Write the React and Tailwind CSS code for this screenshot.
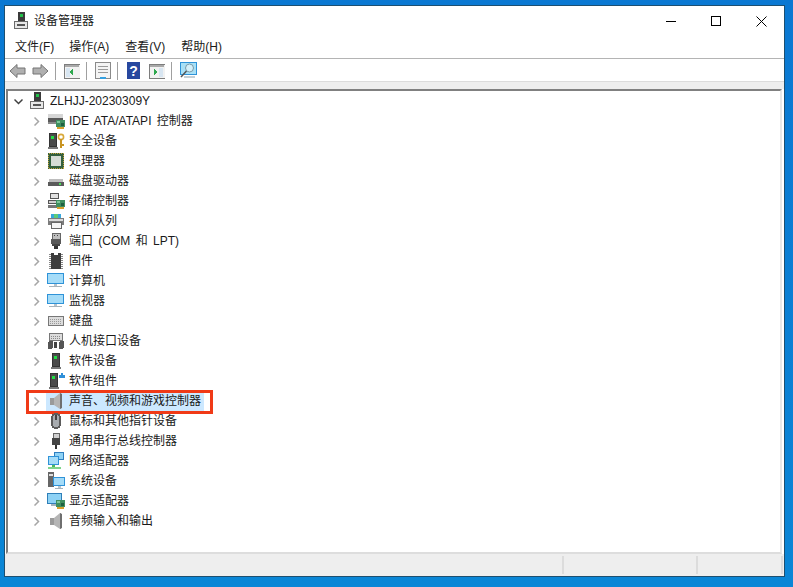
import React from "react";

const Chevron = ({ open }) => (
  <svg width="9" height="9" viewBox="0 0 9 9" fill="none" stroke={open ? "#404040" : "#a6a6a6"} strokeWidth="1.5">
    {open ? <path d="M0.5 2.5 L4.5 6.5 L8.5 2.5" /> : <path d="M2.5 0.5 L6.5 4.5 L2.5 8.5" />}
  </svg>
);

const Svg = ({ children, w = 18 }) => (
  <svg width={w} height="18" viewBox="0 0 18 18" shapeRendering="crispEdges">{children}</svg>
);

const Card = () => (
  <>
    <rect x="9" y="8" width="9" height="7" fill="#3f8f5f" />
    <rect x="10" y="9" width="3" height="2" fill="#7fc79a" />
    <rect x="14" y="11" width="3" height="3" fill="#1f5f40" />
    <rect x="10" y="15" width="7" height="1.5" fill="#d8a02c" />
  </>
);

const Monitor = ({ x = 0, y = 1, w = 17, h = 11 }) => (
  <>
    <rect x={x} y={y} width={w} height={h} fill="#2f93d8" />
    <rect x={x + 1} y={y + 1} width={w - 2} height={h - 2} fill="#a5dcf8" />
    <rect x={x + w / 2 - 1.5} y={y + h} width="3" height="2" fill="#b8c4cc" />
    <rect x={x + 2} y={y + h + 2} width={w - 4} height="1" fill="#a7b3bb" />
  </>
);

const Tower = ({ x = 5 }) => (
  <>
    <rect x={x} y="1" width="8" height="14" fill="#333" />
    <rect x={x + 1} y="2" width="6" height="12" fill="#4a4a4a" />
    <rect x={x + 2} y="4" width="3" height="3" fill="#22dd44" />
    <rect x={x - 1} y="15" width="10" height="2" fill="#777" />
  </>
);

const Speaker = () => (
  <>
    <rect x="3" y="6" width="4" height="7" fill="#9a9a9a" />
    <path d="M7 6 L13 1 L14 1 L14 17 L13 17 L7 13 Z" fill="#b5b5b5" shapeRendering="auto" />
    <path d="M13 1 L15 2 L15 16 L13 17 Z" fill="#6f6f6f" shapeRendering="auto" />
  </>
);

const Computer = () => (
  <Svg>
    <rect x="6" y="0" width="7" height="10" fill="#3a3a3a" />
    <rect x="8" y="2" width="3" height="3" fill="#22c04a" />
    <rect x="2" y="9" width="14" height="8" fill="#6a6a6a" />
    <rect x="3" y="10" width="12" height="6" fill="#e8e8e8" />
    <rect x="5" y="12" width="8" height="2" fill="#555" />
  </Svg>
);

const icons = {
  ide: (
    <Svg>
      <rect x="1" y="2" width="15" height="6" fill="#d6d6d6" />
      <rect x="1" y="6" width="15" height="4" fill="#5a5a5a" />
      <rect x="1" y="10" width="8" height="2" fill="#8a8a8a" />
      <Card />
    </Svg>
  ),
  security: (
    <Svg>
      <Tower x={2} />
      <circle cx="14" cy="5" r="2.6" fill="none" stroke="#d9a93a" strokeWidth="1.6" shapeRendering="auto" />
      <rect x="13" y="7" width="2" height="9" fill="#c99522" />
      <rect x="15" y="12" width="2" height="2" fill="#c99522" />
    </Svg>
  ),
  cpu: (
    <Svg>
      <rect x="1" y="1" width="16" height="16" fill="#34603f" />
      <rect x="1.5" y="1.5" width="15" height="15" fill="none" stroke="#c4a23a" strokeDasharray="1 1" />
      <rect x="4" y="4" width="10" height="10" fill="#d6dcd6" />
    </Svg>
  ),
  disk: (
    <Svg>
      <rect x="2" y="7" width="14" height="4" fill="#bdbdbd" />
      <rect x="1" y="10" width="16" height="4" fill="#5a5a5a" />
      <rect x="12" y="11" width="2" height="2" fill="#4ade5a" />
    </Svg>
  ),
  storage: (
    <Svg>
      <rect x="3" y="1" width="8" height="5" fill="#e0e0e0" stroke="#555" />
      <rect x="1" y="8" width="9" height="3" fill="#cfcfcf" stroke="#555" />
      <rect x="1" y="13" width="9" height="3" fill="#777" />
      <Card />
    </Svg>
  ),
  printer: (
    <Svg>
      <rect x="4" y="2" width="10" height="4" fill="#38a7dc" />
      <rect x="7" y="2" width="4" height="4" fill="#5ecb78" />
      <rect x="1" y="6" width="16" height="7" fill="#7c7c7c" />
      <rect x="2" y="7" width="14" height="2" fill="#d9d9d9" />
      <rect x="4" y="10" width="10" height="6" fill="#f4f4f4" stroke="#666" />
    </Svg>
  ),
  port: (
    <Svg>
      <rect x="5" y="1" width="8" height="6" fill="#bdbdbd" stroke="#666" />
      <rect x="7" y="3" width="1" height="1" fill="#444" />
      <rect x="10" y="3" width="1" height="1" fill="#444" />
      <rect x="4" y="7" width="10" height="5" fill="#595959" />
      <rect x="5" y="12" width="8" height="2" fill="#444" />
      <rect x="7" y="14" width="4" height="3" fill="#333" />
    </Svg>
  ),
  firmware: (
    <Svg>
      <rect x="4" y="1" width="10" height="16" fill="#3d3d3d" />
      <rect x="7" y="1" width="4" height="2" fill="#fff" />
      <path d="M2 2h2M2 4h2M2 6h2M2 8h2M2 10h2M2 12h2M2 14h2M2 16h2M14 2h2M14 4h2M14 6h2M14 8h2M14 10h2M14 12h2M14 14h2M14 16h2" stroke="#888" />
    </Svg>
  ),
  computer: <Svg><Monitor /></Svg>,
  monitor: <Svg><Monitor y={2} h={10} /></Svg>,
  keyboard: (
    <Svg>
      <rect x="1" y="4" width="16" height="10" fill="#777" />
      <rect x="2" y="5" width="14" height="8" fill="#dcdcdc" />
      <path d="M3 7h12M3 9h12M3 11h12" stroke="#9a9a9a" strokeDasharray="1 1" />
    </Svg>
  ),
  hid: (
    <Svg>
      <rect x="2" y="1" width="14" height="8" fill="#777" />
      <rect x="3" y="2" width="12" height="6" fill="#dcdcdc" />
      <path d="M4 4h10M4 6h10" stroke="#8a8a8a" strokeDasharray="1 1" />
      <rect x="1" y="9" width="5" height="8" rx="2" fill="#555" />
      <rect x="7" y="10" width="3" height="6" fill="#444" />
      <rect x="12" y="9" width="5" height="8" rx="2" fill="#555" />
    </Svg>
  ),
  software: <Svg><Tower x={5} /></Svg>,
  component: (
    <Svg>
      <Tower x={3} />
      <path d="M12 3h2V1h2v2h2v3h-6z" fill="#2f8fd8" />
    </Svg>
  ),
  speaker: <Svg><Speaker /></Svg>,
  mouse: (
    <Svg>
      <rect x="4" y="1" width="10" height="16" rx="5" fill="#5c5c5c" />
      <rect x="6" y="3" width="6" height="12" rx="3" fill="#a8acb0" />
      <rect x="8" y="3" width="2" height="5" fill="#444" />
    </Svg>
  ),
  usb: (
    <Svg>
      <rect x="6" y="1" width="6" height="5" fill="#d0d0d0" stroke="#666" />
      <rect x="5" y="6" width="8" height="7" rx="1" fill="#444" />
      <rect x="8" y="13" width="2" height="4" fill="#333" />
    </Svg>
  ),
  network: (
    <Svg>
      <rect x="7" y="0" width="10" height="8" fill="#2f7fc0" />
      <rect x="8" y="1" width="8" height="6" fill="#8ed2f5" />
      <rect x="1" y="4" width="11" height="9" fill="#2f93d8" />
      <rect x="2" y="5" width="9" height="7" fill="#a5dcf8" />
      <rect x="5" y="13" width="3" height="2" fill="#4fb95f" />
      <rect x="1" y="15" width="13" height="2" fill="#7fd48c" />
    </Svg>
  ),
  system: (
    <Svg>
      <rect x="1" y="0" width="6" height="15" fill="#666" />
      <rect x="2" y="2" width="4" height="2" fill="#ddd" />
      <Monitor x={6} y={5} w={12} h={9} />
    </Svg>
  ),
  display: (
    <Svg>
      <rect x="0" y="1" width="15" height="11" fill="#2f7fb8" />
      <rect x="1" y="2" width="13" height="9" fill="#8ed2f5" />
      <rect x="4" y="12" width="6" height="2" fill="#a7b3bb" />
      <Card />
    </Svg>
  ),
};

const devices = [
  ["IDE ATA/ATAPI 控制器", "ide"],
  ["安全设备", "security"],
  ["处理器", "cpu"],
  ["磁盘驱动器", "disk"],
  ["存储控制器", "storage"],
  ["打印队列", "printer"],
  ["端口 (COM 和 LPT)", "port"],
  ["固件", "firmware"],
  ["计算机", "computer"],
  ["监视器", "monitor"],
  ["键盘", "keyboard"],
  ["人机接口设备", "hid"],
  ["软件设备", "software"],
  ["软件组件", "component"],
  ["声音、视频和游戏控制器", "speaker", true],
  ["鼠标和其他指针设备", "mouse"],
  ["通用串行总线控制器", "usb"],
  ["网络适配器", "network"],
  ["系统设备", "system"],
  ["显示适配器", "display"],
  ["音频输入和输出", "speaker"],
];

const Sep = ({ after = 8 }) => (
  <div className={`w-px h-[18px] ml-[6px] bg-[#a0a0a0] ${after === 9 ? "mr-[9px]" : "mr-[8px]"}`} />
);

const ToolWin = ({ arrow, flip }) => (
  <svg width="16" height="16" viewBox="0 0 16 16" shapeRendering="crispEdges">
    <rect x="0" y="1" width="16" height="14" fill="#f2f2f2" stroke="#7d7d7d" />
    <rect x="1" y="2" width="14" height="2" fill="#a9a9a9" />
    <rect x={flip ? 10 : 2} y="5" width="4" height="9" fill="#d8e6f2" />
    <path d={arrow} fill="#2fa84f" />
  </svg>
);

const Back = ({ right }) => (
  <svg width="17" height="14" viewBox="0 0 17 14">
    <path
      d={right ? "M1 4 H9 V0.5 L16 7 L9 13.5 V10 H1 Z" : "M16 4 H8 V0.5 L1 7 L8 13.5 V10 H16 Z"}
      fill="#b0b0b0"
      stroke="#757575"
    />
  </svg>
);

export default function App() {
  return (
    <div
      className="w-[793px] h-[587px] overflow-hidden pt-[5px] pl-[4px] bg-gradient-to-b from-[#0a78d2] to-[#0a86d6]"
      style={{ fontFamily: '"Liberation Sans", "Noto Sans CJK SC", sans-serif' }}
    >
      <div className="w-[781px] h-[572px] flex flex-col bg-white border border-[#1d4f70] text-[12px] text-[#1a1a1a]">
        {/* title bar */}
        <div className="h-[30px] flex items-center pl-[7px] shrink-0">
          <Computer />
          <span className="ml-[4px]">设备管理器</span>
          <div className="ml-auto flex items-center">
            <div className="w-[45px] flex justify-center"><div className="w-[10px] h-px bg-black" /></div>
            <div className="w-[45px] flex justify-center"><div className="w-[10px] h-[10px] border border-black" /></div>
            <div className="w-[46px] flex justify-center">
              <svg width="11" height="11" viewBox="0 0 11 11" stroke="#000"><path d="M0.5 0.5 L10.5 10.5 M10.5 0.5 L0.5 10.5" /></svg>
            </div>
          </div>
        </div>

        {/* menu */}
        <div className="h-[23px] flex items-center gap-[16px] pl-[10px] border-b border-[#b4b4b4] shrink-0">
          <span className="mr-[-1px]">文件(F)</span>
          <span>操作(A)</span>
          <span>查看(V)</span>
          <span>帮助(H)</span>
        </div>

        {/* toolbar */}
        <div className="h-[22px] flex items-center pl-[4px] pt-[1px] shrink-0">
          <Back />
          <div className="w-[6px]" />
          <Back right />
          <Sep />
          <ToolWin arrow="M5 9 L9 6 V12 Z" />
          <Sep />
          <svg width="16" height="18" viewBox="0 0 16 18" shapeRendering="crispEdges">
            <rect x="0.5" y="0.5" width="15" height="16" fill="#f4f4f4" stroke="#8a8a8a" />
            <path d="M3 4h10M3 7h10M3 10h10" stroke="#9a9a9a" />
            <rect x="5" y="15" width="6" height="2" fill="#35a0e0" />
          </svg>
          <Sep after={9} />
          <div className="w-[13px] h-[17px] flex items-center justify-center bg-[#28489f] text-white text-[14px] font-bold leading-none">?</div>
          <div className="w-[9px]" />
          <ToolWin arrow="M5 6 L9 9 L5 12 Z" flip />
          <Sep />
          <svg width="17" height="18" viewBox="0 0 17 18">
            <rect x="0.5" y="0.5" width="16" height="12" fill="#a8e0f6" stroke="#2f93d8" />
            <circle cx="9.5" cy="6" r="4" fill="#d4f0fa" stroke="#7a9aa8" />
            <path d="M6.5 9 L1 15" stroke="#555" strokeWidth="1.5" />
            <path d="M4 15h11" stroke="#8aa0ac" />
          </svg>
        </div>

        {/* grey strip */}
        <div className="h-[8px] bg-[#eeeeee] border-t border-[#dcdcdc] shrink-0" />

        {/* tree */}
        <div className="flex-1 min-h-0 ml-px mr-[2px] border-t-2 border-l-2 border-t-[#808080] border-l-[#808080] border-r-2 border-r-[#e8e8e8] border-b-2 border-b-[#dddddd] [word-spacing:2px]">
          <div className="h-[20px] flex items-center pl-[6px]">
            <Chevron open />
            <div className="ml-[5px] flex"><Computer /></div>
            <span className="ml-[4px]">ZLHJJ-20230309Y</span>
          </div>
          {devices.map(([label, icon, selected]) => (
            <div key={label} className="relative h-[20px] flex items-center pl-[24px]">
              <Chevron />
              <div className={`ml-[5px] flex items-center h-[20px] pr-[3px] ${selected ? "bg-[#cce8ff]" : ""}`}>
                <div className="flex w-[20px] shrink-0 justify-center">{icons[icon]}</div>
                <span className="ml-[3px]">{label}</span>
              </div>
              {selected && (
                <div className="absolute left-[18px] top-[-1px] w-[187px] h-[24px] border-[3px] border-[#f03a17]" />
              )}
            </div>
          ))}
        </div>

        {/* status bar */}
        <div className="h-[22px] flex bg-[#eeeeee] py-[2px] shrink-0">
          <div className="w-[559px] border-r-2 border-[#dcdcdc]" />
          <div className="w-[134px] border-r-2 border-[#dcdcdc]" />
          <div className="w-[85px] border-r-2 border-[#dcdcdc]" />
        </div>
      </div>
    </div>
  );
}
